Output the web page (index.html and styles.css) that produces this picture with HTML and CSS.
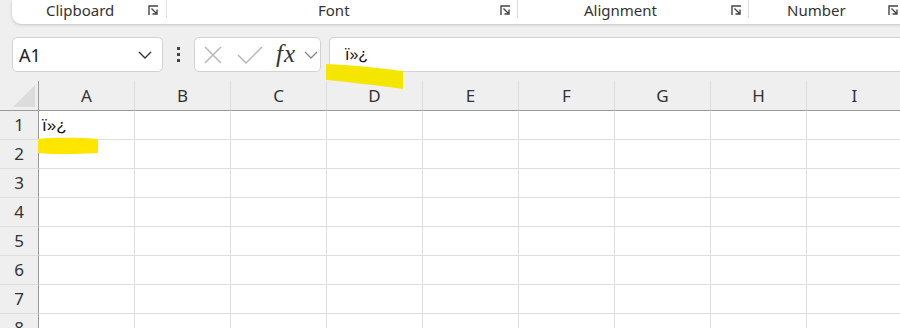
FILE: index.html
```html
<!DOCTYPE html>
<html>
<head>
<meta charset="utf-8">
<link rel="stylesheet" href="styles.css">
</head>
<body>
<div class="app">
  <div class="ribbon">
    <div class="group g-clip"><span class="label">Clipboard</span><span class="launch"><svg width="11" height="11" viewBox="0 0 11 11"><path d="M1 10V1h9" fill="none" stroke="#444" stroke-width="1.4"/><path d="M3.5 3.5l5.5 5.5M4.5 9h4.5V4.5" fill="none" stroke="#444" stroke-width="1.4"/></svg></span></div>
    <div class="group g-font"><span class="label">Font</span><span class="launch"><svg width="11" height="11" viewBox="0 0 11 11"><path d="M1 10V1h9" fill="none" stroke="#444" stroke-width="1.4"/><path d="M3.5 3.5l5.5 5.5M4.5 9h4.5V4.5" fill="none" stroke="#444" stroke-width="1.4"/></svg></span></div>
    <div class="group g-align"><span class="label">Alignment</span><span class="launch"><svg width="11" height="11" viewBox="0 0 11 11"><path d="M1 10V1h9" fill="none" stroke="#444" stroke-width="1.4"/><path d="M3.5 3.5l5.5 5.5M4.5 9h4.5V4.5" fill="none" stroke="#444" stroke-width="1.4"/></svg></span></div>
    <div class="group g-num"><span class="label">Number</span><span class="launch"><svg width="11" height="11" viewBox="0 0 11 11"><path d="M1 10V1h9" fill="none" stroke="#444" stroke-width="1.4"/><path d="M3.5 3.5l5.5 5.5M4.5 9h4.5V4.5" fill="none" stroke="#444" stroke-width="1.4"/></svg></span></div>
  </div>

  <div class="fbar">
    <div class="namebox"><span class="ref">A1</span><svg class="chev" width="14" height="8" viewBox="0 0 14 8"><path d="M1 1l6 6 6-6" fill="none" stroke="#333" stroke-width="1.4"/></svg></div>
    <div class="dots"><i></i><i></i><i></i></div>
    <div class="btns">
      <svg class="x" width="20" height="20" viewBox="0 0 20 20"><path d="M2 2l16 16M18 2L2 18" stroke="#b8b8b8" stroke-width="1.5"/></svg>
      <svg class="ok" width="26" height="20" viewBox="0 0 26 20"><path d="M1 10l8 8L25 2" fill="none" stroke="#b8b8b8" stroke-width="1.5"/></svg>
      <span class="fx">fx</span>
      <svg class="chev2" width="14" height="8" viewBox="0 0 14 8"><path d="M1 1l6 6 6-6" fill="none" stroke="#888" stroke-width="1.3"/></svg>
    </div>
    <div class="formula"><span>ï»¿</span></div>
  </div>

  <div class="sheet">
    <div class="corner"><svg width="22" height="22" viewBox="0 0 22 22"><path d="M22 0V22H0Z" fill="#dcdcdc"/></svg></div>
    <div class="ch">A</div><div class="ch">B</div><div class="ch">C</div><div class="ch">D</div><div class="ch">E</div><div class="ch">F</div><div class="ch">G</div><div class="ch">H</div><div class="ch">I</div>

    <div class="rh">1</div><div class="c">ï»¿</div><div class="c"></div><div class="c"></div><div class="c"></div><div class="c"></div><div class="c"></div><div class="c"></div><div class="c"></div><div class="c"></div>
    <div class="rh">2</div><div class="c"></div><div class="c"></div><div class="c"></div><div class="c"></div><div class="c"></div><div class="c"></div><div class="c"></div><div class="c"></div><div class="c"></div>
    <div class="rh">3</div><div class="c"></div><div class="c"></div><div class="c"></div><div class="c"></div><div class="c"></div><div class="c"></div><div class="c"></div><div class="c"></div><div class="c"></div>
    <div class="rh">4</div><div class="c"></div><div class="c"></div><div class="c"></div><div class="c"></div><div class="c"></div><div class="c"></div><div class="c"></div><div class="c"></div><div class="c"></div>
    <div class="rh">5</div><div class="c"></div><div class="c"></div><div class="c"></div><div class="c"></div><div class="c"></div><div class="c"></div><div class="c"></div><div class="c"></div><div class="c"></div>
    <div class="rh">6</div><div class="c"></div><div class="c"></div><div class="c"></div><div class="c"></div><div class="c"></div><div class="c"></div><div class="c"></div><div class="c"></div><div class="c"></div>
    <div class="rh">7</div><div class="c"></div><div class="c"></div><div class="c"></div><div class="c"></div><div class="c"></div><div class="c"></div><div class="c"></div><div class="c"></div><div class="c"></div>
    <div class="rh">8</div><div class="c"></div><div class="c"></div><div class="c"></div><div class="c"></div><div class="c"></div><div class="c"></div><div class="c"></div><div class="c"></div><div class="c"></div>
  </div>

  <svg class="hl hl1" width="80" height="28" viewBox="0 0 80 28"><path d="M1 1 C25 2 55 5 78 8 L78 26 C55 23 25 19 1 17 Z" fill="#f5e600"/></svg>
  <svg class="hl hl2" width="62" height="20" viewBox="0 0 62 20"><path d="M0 2 C20 0 45 1 60 2 L60 16 C40 17 20 18 0 16 Z" fill="#ffe600"/></svg>
</div>
</body>
</html>
```

FILE: styles.css
```css
* { box-sizing: border-box; }
html, body { margin: 0; padding: 0; }
body {
  width: 900px;
  height: 328px;
  overflow: hidden;
  background: #efefef;
  font-family: "Noto Sans", "Open Sans", sans-serif;
  color: #333;
}
.app { position: relative; width: 900px; height: 328px; overflow: hidden; }

.ribbon {
  margin-left: 12px;
  width: 900px;
  height: 24px;
  background: #fff;
  border-bottom-left-radius: 9px;
  box-shadow: 0 1px 3px rgba(0,0,0,0.18);
  display: flex;
  align-items: flex-start;
}
.group {
  position: relative;
  display: flex;
  align-items: flex-start;
  border-right: 1px solid #e0e0e0;
  height: 18px;
}
.group .label { font-size: 15px; line-height: 20px; color: #333; white-space: nowrap; }
.launch { position: absolute; top: 5px; display: flex; }
.g-clip { width: 155px; }
.g-clip .label { margin-left: 34px; }
.g-clip .launch { left: 136px; }
.g-font { width: 351px; }
.g-font .label { margin-left: 151px; }
.g-font .launch { left: 333px; }
.g-align { width: 231px; }
.g-align .label { margin-left: 66px; }
.g-align .launch { left: 213px; }
.g-num { width: 160px; border-right: none; }
.g-num .label { margin-left: 38px; }
.g-num .launch { left: 139px; }

.fbar {
  display: flex;
  align-items: center;
  height: 35px;
  margin-top: 13px;
  padding-left: 12px;
}
.namebox {
  width: 151px;
  height: 35px;
  background: #fff;
  border: 1px solid #d2d2d2;
  border-radius: 5px;
  display: flex;
  align-items: center;
  justify-content: space-between;
  padding: 0 10px 0 6px;
}
.ref { font-size: 18px; color: #222; }
.dots {
  width: 31px;
  display: flex;
  flex-direction: column;
  align-items: center;
  gap: 3px;
}
.dots i { display: block; width: 3px; height: 3px; background: #444; }
.btns {
  width: 127px;
  height: 35px;
  background: #fff;
  border: 1px solid #d2d2d2;
  border-radius: 5px;
  display: flex;
  align-items: center;
  padding-left: 8px;
}
.btns .x { margin-right: 14px; }
.btns .ok { margin-right: 13px; }
.fx { font-family: "Liberation Serif", serif; font-style: italic; font-size: 25px; color: #333; margin-right: 8px; line-height: 1; margin-top: -3px; letter-spacing: 1px; }
.formula {
  margin-left: 8px;
  flex: 1;
  height: 35px;
  background: #fff;
  border: 1px solid #d2d2d2;
  border-right: none;
  border-radius: 5px 0 0 5px;
  display: flex;
  align-items: center;
  padding-left: 15px;
  font-family: "Liberation Sans", sans-serif;
  font-size: 16px;
  color: #111;
}

.sheet {
  margin-top: 9px;
  display: grid;
  grid-template-columns: 39px repeat(9, 96px);
  grid-template-rows: 30px repeat(8, 29px);
}
.corner {
  background: #efefef;
  border-right: 1px solid #9a9a9a;
  border-bottom: 1px solid #9a9a9a;
  display: flex;
  align-items: flex-end;
  justify-content: flex-end;
  padding: 0 3px 3px 0;
}
.ch {
  background: #efefef;
  border-bottom: 1px solid #9a9a9a;
  border-right: 1px solid #dedede;
  text-align: center;
  font-size: 17px;
  line-height: 30px;
  color: #333;
}
.rh {
  background: #efefef;
  border-right: 1px solid #9a9a9a;
  border-bottom: 1px solid #dedede;
  text-align: center;
  font-size: 17px;
  line-height: 28px;
  color: #333;
}
.c {
  background: #fff;
  border-right: 1px solid #dedede;
  border-bottom: 1px solid #dedede;
  font-family: "Liberation Sans", sans-serif;
  font-size: 17px;
  line-height: 30px;
  padding-left: 3px;
  color: #111;
}

.hl { position: absolute; }
.hl1 { left: 325px; top: 63px; }
.hl2 { left: 38px; top: 137px; }
```
